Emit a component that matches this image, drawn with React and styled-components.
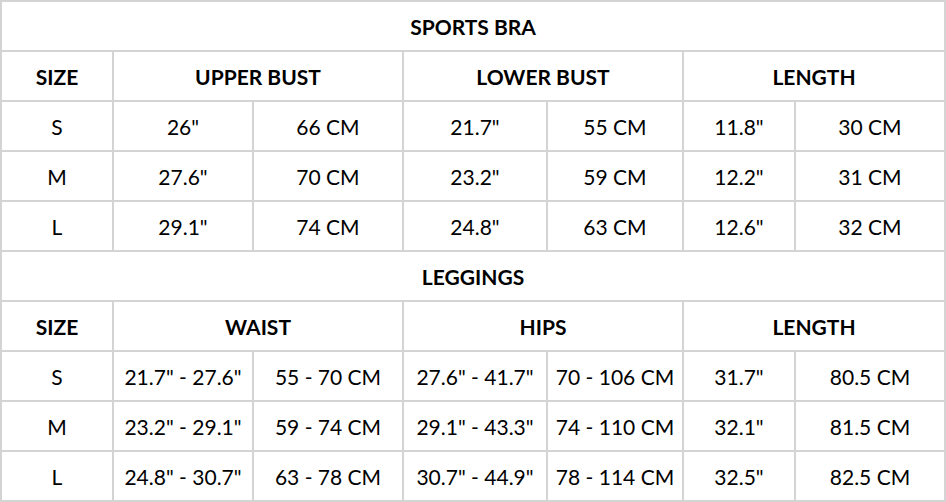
import React from 'react';
import styled, { createGlobalStyle } from 'styled-components';

const GlobalStyle = createGlobalStyle`
    html, body {
        margin: 0;
        padding: 0;
        background: #fff;
    }
    body {
        font-family: Lato, "Open Sans", "Liberation Sans", sans-serif;
        color: #000;
    }
`

const sections = [
    {
        title: 'SPORTS BRA',
        groups: ['UPPER BUST', 'LOWER BUST', 'LENGTH'],
        rows: [
            ['S', '26"', '66 CM', '21.7"', '55 CM', '11.8"', '30 CM'],
            ['M', '27.6"', '70 CM', '23.2"', '59 CM', '12.2"', '31 CM'],
            ['L', '29.1"', '74 CM', '24.8"', '63 CM', '12.6"', '32 CM'],
        ],
    },
    {
        title: 'LEGGINGS',
        groups: ['WAIST', 'HIPS', 'LENGTH'],
        rows: [
            ['S', '21.7" - 27.6"', '55 - 70 CM', '27.6" - 41.7"', '70 - 106 CM', '31.7"', '80.5 CM'],
            ['M', '23.2" - 29.1"', '59 - 74 CM', '29.1" - 43.3"', '74 - 110 CM', '32.1"', '81.5 CM'],
            ['L', '24.8" - 30.7"', '63 - 78 CM', '30.7" - 44.9"', '78 - 114 CM', '32.5"', '82.5 CM'],
        ],
    },
]

function App() {
    return (
        <>
            <GlobalStyle />
            <Sheet>
                {sections.map((section) => (
                    <React.Fragment key={section.title}>
                        <Cell $span={7} $bold>{section.title}</Cell>
                        <Cell $bold>SIZE</Cell>
                        {section.groups.map((g) => (
                            <Cell key={g} $span={2} $bold>{g}</Cell>
                        ))}
                        {section.rows.map((row) =>
                            row.map((value, i) => (
                                <Cell key={row[0] + i}>{value}</Cell>
                            ))
                        )}
                    </React.Fragment>
                ))}
            </Sheet>
        </>
    )
}

const Sheet = styled.div`
    display: grid;
    grid-template-columns: 110px 138px 148px 142px 134px 110px 148px;
    grid-auto-rows: 48px;
    gap: 2px;
    padding: 2px;
    width: 946px;
    box-sizing: border-box;
    background-color: #d4d4d4;
`

const Cell = styled.div`
    grid-column: span ${(p) => p.$span || 1};
    display: flex;
    align-items: center;
    justify-content: center;
    padding-top: 1px;
    background-color: #fff;
    font-size: 21px;
    font-weight: ${(p) => (p.$bold ? 700 : 400)};
    white-space: nowrap;
`

export default App
